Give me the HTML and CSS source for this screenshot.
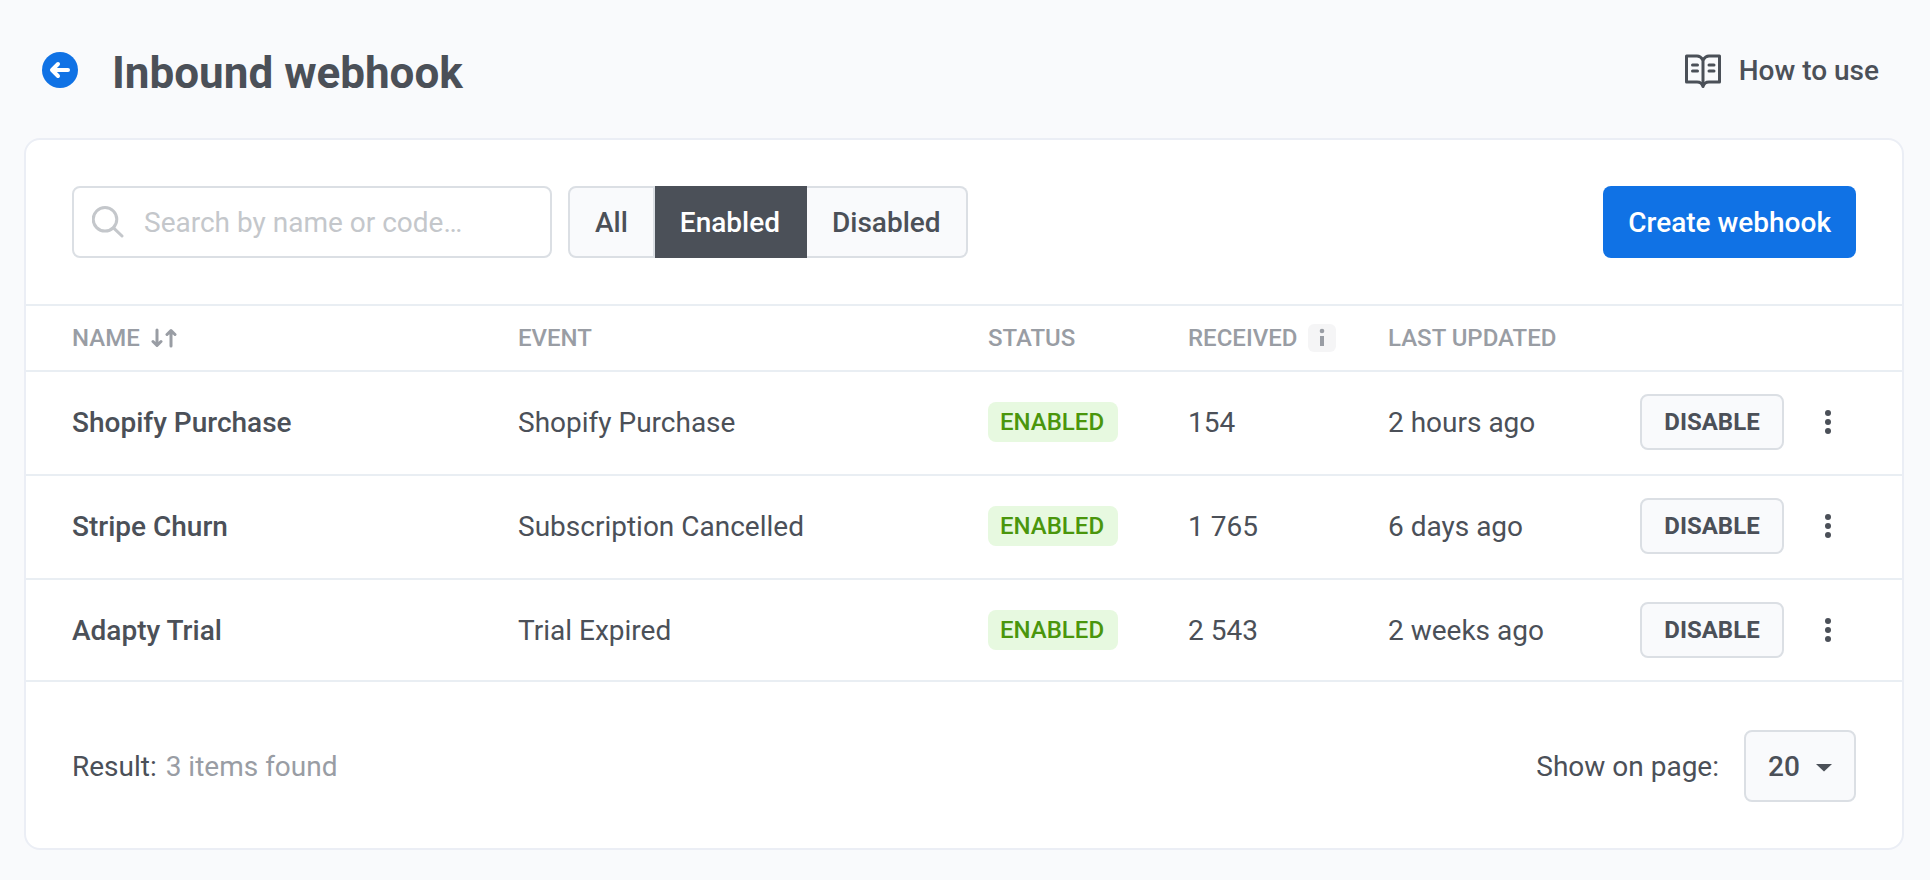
FILE: index.html
```html
<!DOCTYPE html>
<html lang="en">
<head>
<meta charset="utf-8">
<meta name="viewport" content="width=device-width, initial-scale=1">
<title>Inbound webhook</title>
<link rel="stylesheet" href="styles.css">
</head>
<body>
<header class="page-header">
  <a class="back" href="#" aria-label="Back">
    <svg width="36" height="36" viewBox="0 0 36 36" aria-hidden="true">
      <circle cx="18" cy="18" r="18" fill="#1072e5"/>
      <path d="M26 18H10.500M16 12L10 18L16 24" fill="none" stroke="#fff" stroke-width="4" stroke-linecap="round" stroke-linejoin="round"/>
    </svg>
  </a>
  <h1 class="title">Inbound webhook</h1>
  <a class="help" href="#">
    <svg width="36" height="36" viewBox="0 0 36 36" fill="none" stroke="#4b5058" stroke-width="3" aria-hidden="true">
      <path d="M18 7C16.500 4.500 14.500 3 12 3H1.500V29H12C15 29 17 30 18 33.500C19 30 21 29 24 29H34.500V3H24C21.500 3 19.500 4.500 18 7Z" stroke-linejoin="round"/>
      <path d="M18 6V32"/>
      <path d="M7.500 12H12.500M7.500 18H12.500M24 12H29M24 18H29" stroke-linecap="round"/>
    </svg>
    <span>How to use</span>
  </a>
</header>

<main class="card">
  <div class="toolbar">
    <div class="search">
      <svg class="search-icon" width="32" height="32" viewBox="0 0 32 32" fill="none" stroke="#c4c7cb" stroke-width="3" stroke-linecap="round" aria-hidden="true">
        <circle cx="13" cy="13.300" r="11.800"/>
        <path d="M21.500 21.800L30 30"/>
      </svg>
      <input class="search-input" type="text" placeholder="Search by name or code…" aria-label="Search by name or code">
    </div>
    <div class="segments" role="group" aria-label="Status filter">
      <button class="segment" type="button">All</button>
      <button class="segment active" type="button" aria-pressed="true">Enabled</button>
      <button class="segment" type="button">Disabled</button>
    </div>
    <button class="create" type="button">Create webhook</button>
  </div>

  <table class="webhooks">
    <colgroup>
      <col class="col-name"><col class="col-event"><col class="col-status"><col class="col-received"><col class="col-updated"><col class="col-actions">
    </colgroup>
    <thead>
      <tr>
        <th scope="col">
          <button class="sort" type="button">NAME
            <svg width="26" height="20" viewBox="0 0 26 20" fill="none" stroke="#999da4" stroke-width="3" stroke-linecap="round" stroke-linejoin="round" aria-hidden="true">
              <path d="M6 2V17M2 13.500L6 17.500L10 13.500M20 18V3M16 6.500L20 2.500L24 6.500"/>
            </svg>
          </button>
        </th>
        <th scope="col">EVENT</th>
        <th scope="col">STATUS</th>
        <th scope="col">
          <span class="with-info">RECEIVED
            <button class="info" type="button" aria-label="About received">
              <svg width="28" height="28" viewBox="0 0 28 28" fill="#999da4" aria-hidden="true">
                <circle cx="14" cy="7" r="2.300"/><path d="M12 12H16V22H12Z"/>
              </svg>
            </button>
          </span>
        </th>
        <th scope="col">LAST UPDATED</th>
        <td></td>
      </tr>
    </thead>
    <tbody>
      <tr>
        <th class="text" scope="row">Shopify Purchase</th>
        <td class="text">Shopify Purchase</td>
        <td><span class="badge">ENABLED</span></td>
        <td class="text">154</td>
        <td class="text">2 hours ago</td>
        <td><div class="actions"><button class="disable" type="button">DISABLE</button><button class="more" type="button" aria-label="More actions"><svg width="6" height="24" viewBox="0 0 6 24" aria-hidden="true"><circle cx="3" cy="3" r="3"/><circle cx="3" cy="12" r="3"/><circle cx="3" cy="21" r="3"/></svg></button></div></td>
      </tr>
      <tr>
        <th class="text" scope="row">Stripe Churn</th>
        <td class="text">Subscription Cancelled</td>
        <td><span class="badge">ENABLED</span></td>
        <td class="text">1 765</td>
        <td class="text">6 days ago</td>
        <td><div class="actions"><button class="disable" type="button">DISABLE</button><button class="more" type="button" aria-label="More actions"><svg width="6" height="24" viewBox="0 0 6 24" aria-hidden="true"><circle cx="3" cy="3" r="3"/><circle cx="3" cy="12" r="3"/><circle cx="3" cy="21" r="3"/></svg></button></div></td>
      </tr>
      <tr>
        <th class="text" scope="row">Adapty Trial</th>
        <td class="text">Trial Expired</td>
        <td><span class="badge">ENABLED</span></td>
        <td class="text">2 543</td>
        <td class="text">2 weeks ago</td>
        <td><div class="actions"><button class="disable" type="button">DISABLE</button><button class="more" type="button" aria-label="More actions"><svg width="6" height="24" viewBox="0 0 6 24" aria-hidden="true"><circle cx="3" cy="3" r="3"/><circle cx="3" cy="12" r="3"/><circle cx="3" cy="21" r="3"/></svg></button></div></td>
      </tr>
    </tbody>
  </table>

  <footer class="footer">
    <p class="result">Result: <span class="count">3 items found</span></p>
    <label class="per-page-label" for="per-page">Show on page:</label>
    <div class="per-page">
      <select class="select" id="per-page"><option>20</option><option>50</option></select>
      <svg class="caret" width="16" height="8" viewBox="0 0 16 8" aria-hidden="true"><path d="M0 0H16L8 7.500Z" fill="#4b5058"/></svg>
    </div>
  </footer>
</main>
</body>
</html>
```
FILE: styles.css
```css
* { box-sizing: border-box; }

body {
  margin: 0;
  padding: 0 26px 30px 24px;
  background: #f9fafc;
  color: #4b5058;
  font: 400 28px/32px Roboto, sans-serif;
}

button, input, select { font: inherit; color: inherit; margin: 0; }
button { cursor: pointer; }
a { color: inherit; text-decoration: none; }
svg { display: block; flex: none; }

.page-header {
  display: flex;
  align-items: center;
  padding: 41px 25px 39px 18px;
}
.title {
  margin: 0 0 0 34px;
  padding-top: 6px;
  font-size: 44px;
  line-height: 52px;
  font-weight: 700;
}
.help {
  display: flex;
  align-items: center;
  gap: 18px;
  margin-left: auto;
  padding-top: 2px;
  font-weight: 500;
}

.card {
  background: #fff;
  border: 2px solid #ebeef5;
  border-radius: 16px;
}

.toolbar {
  display: flex;
  gap: 16px;
  padding: 46px;
}
.search { position: relative; width: 480px; }
.search-icon { position: absolute; left: 20px; top: 20px; }
.search-input {
  width: 100%;
  height: 72px;
  padding: 0 20px 0 70px;
  background: #fff;
  border: 2px solid #dbdfe4;
  border-radius: 8px;
}
.search-input::placeholder { color: #c4c7cb; opacity: 1; }

.segments { display: flex; }
.segment {
  height: 72px;
  padding: 2px 25px 0;
  background: #f9fafc;
  border: 2px solid #dbdfe4;
  font-weight: 500;
}
.segment:first-child { border-radius: 8px 0 0 8px; }
.segment:last-child { border-left: 0; border-radius: 0 8px 8px 0; }
.segment.active { background: #4b5058; border-color: #4b5058; color: #fff; border-left: 0; }

.create {
  height: 72px;
  margin-left: auto;
  padding: 2px 25px 0;
  background: #1072e5;
  border: 0;
  border-radius: 8px;
  color: #fff;
  font-weight: 500;
}

.webhooks {
  width: 100%;
  table-layout: fixed;
  border-spacing: 0;
  border-bottom: 2px solid #e9eef3;
}
.col-name { width: 492px; }
.col-status, .col-received { width: 200px; }
.col-updated { width: 252px; }
.col-actions { width: 262px; }
.webhooks th, .webhooks td {
  height: 104px;
  padding: 0 0 2px;
  border-top: 2px solid #e9eef3;
  text-align: left;
  vertical-align: middle;
  white-space: nowrap;
}
.webhooks .text { padding-top: 2px; }
.webhooks tr > :first-child { padding-left: 46px; }
.webhooks tr > :last-child { padding-right: 46px; }
.webhooks thead th, .webhooks thead td {
  height: 66px;
  padding-bottom: 0;
  color: #999da4;
  font-size: 24px;
  font-weight: 500;
}
.webhooks tbody th { font-weight: 500; }
.webhooks tbody tr:last-child > * { height: 102px; padding-bottom: 0; }

.sort, .info { padding: 0; border: 0; background: none; }
.sort, .with-info { display: flex; align-items: center; gap: 11px; }
.info { border-radius: 6px; background: #f5f5f6; }

.badge {
  display: block;
  width: 130px;
  padding: 4px 12px;
  border-radius: 8px;
  background: #e7f9e0;
  color: #4a960c;
  font-size: 24px;
  font-weight: 500;
}

.actions { display: flex; align-items: center; gap: 16px; }
.disable {
  width: 144px;
  height: 56px;
  padding: 0;
  background: #f9fafc;
  border: 2px solid #dbdfe4;
  border-radius: 8px;
  font-size: 24px;
  font-weight: 700;
}
.more {
  display: grid;
  place-items: center;
  width: 56px;
  height: 56px;
  padding: 0;
  border: 0;
  background: none;
  fill: #4b5058;
}

.footer {
  display: flex;
  align-items: center;
  padding: 48px 46px 46px;
}
.result { margin: 0 auto 0 0; padding-top: 2px; }
.count { margin-left: 2px; color: #999da4; }
.per-page-label { padding-top: 2px; }
.per-page { position: relative; margin-left: 25px; }
.select {
  appearance: none;
  width: 112px;
  height: 72px;
  padding: 2px 0 0 22px;
  background: #f9fafc;
  border: 2px solid #dbdfe4;
  border-radius: 8px;
  font-weight: 500;
}
.caret { position: absolute; right: 24px; top: 34px; pointer-events: none; }
```
